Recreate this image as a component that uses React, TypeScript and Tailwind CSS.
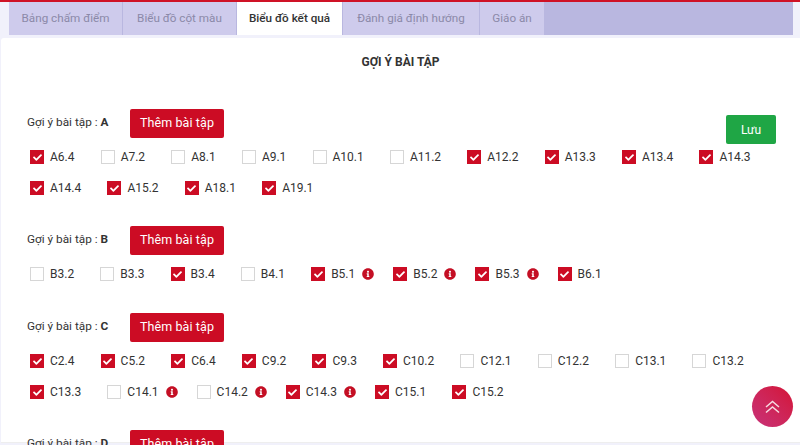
import React from "react";
import { FaInfoCircle, FaCheck } from "react-icons/fa";

type Item = { n: string; c?: boolean; i?: boolean };
const mk = (s: string): Item[] =>
  s.split(" ").map((t) => ({ n: t.replace(/[*!]/g, ""), c: t.includes("*"), i: t.includes("!") }));

const tabs = [
  { t: "Bảng chấm điểm", w: "w-[114px]" },
  { t: "Biểu đồ cột màu", w: "w-[114px]" },
  { t: "Biểu đồ kết quả", w: "w-[106px]", active: true },
  { t: "Đánh giá định hướng", w: "w-[137px]" },
  { t: "Giáo án", w: "w-[65px]" },
];

function Check({ item }: { item: Item }) {
  return (
    <label className="flex items-center h-[16px]">
      <span
        className={
          item.c
            ? "w-[14px] h-[14px] bg-[#cc0c24] flex items-center justify-center text-white"
            : "w-[14px] h-[14px] bg-white border-[1.5px] border-[#d6d6d6] flex items-center justify-center"
        }
      >
        {item.c && <FaCheck className="w-[9px] h-[9px]" />}
      </span>
      <span className="ml-[6px] text-[12px] leading-[16px] text-[#333]">{item.n}</span>
      {item.i && <FaInfoCircle className="ml-[7px] w-[12px] h-[12px] text-[#c40f24]" />}
    </label>
  );
}

function Row({ items, className = "" }: { items: Item[]; className?: string }) {
  return (
    <div className={"flex pl-[30px] h-[16px] " + className}>
      {items.map((it) => (
        <div key={it.n} className={it.i ? "mr-[19px]" : "mr-[26.15px]"}>
          <Check item={it} />
        </div>
      ))}
    </div>
  );
}

function Head({ letter }: { letter: string }) {
  return (
    <div className="flex items-center pl-[27px] h-[30px]">
      <span className="w-[103px] text-[11.8px] text-[#333]">
        Gợi ý bài tập : <b className="font-bold">{letter}</b>
      </span>
      <button className="w-[94px] h-[29px] rounded-[2px] bg-[#cc0c24] text-white text-[12.5px] tracking-[0.1px]">
        Thêm bài tập
      </button>
    </div>
  );
}

export default function App() {
  return (
    <div
      className="relative w-[800px] h-[445px] overflow-hidden bg-[#f1f1fb]"
      style={{ fontFamily: "Roboto, 'Noto Sans', sans-serif" }}
    >
      <div className="h-[2px] bg-[#cf1226]" />
      <div className="mx-[9px] w-[784px] h-[33px] bg-[#b9b7e0] flex">
        {tabs.map((t) => (
          <div
            key={t.t}
            className={
              t.w +
              " flex items-center justify-center text-[11.7px] border-r border-[#b9b7e0] " +
              (t.active
                ? "bg-white text-[#333] font-medium"
                : "bg-[#cecbec] text-[#8b89a8]")
            }
          >
            {t.t}
          </div>
        ))}
      </div>
      <div className="mt-[3px] ml-[1px] bg-white h-[405px] rounded-tl-[3px] border-b border-[#eeeeee]">
        <div className="pt-[15px] text-center text-[12px] font-bold text-[#333]">GỢI Ý BÀI TẬP</div>

        <div className="mt-[37px] flex justify-between -ml-[1px]">
          <Head letter="A" />
          <button className="mt-[7px] -mb-[7px] mr-[24px] w-[50px] h-[29px] rounded-[2px] bg-[#1fa645] text-white text-[12px]">
            Lưu
          </button>
        </div>
        <div className="-ml-[1px]">
          <Row
            className="mt-[11px]"
            items={mk("A6.4* A7.2 A8.1 A9.1 A10.1 A11.2 A12.2* A13.3* A13.4* A14.3*")}
          />
          <Row className="mt-[15px]" items={mk("A14.4* A15.2* A18.1* A19.1*")} />
          <div className="mt-[29px]">
            <Head letter="B" />
          </div>
          <Row
            className="mt-[11px]"
            items={mk("B3.2 B3.3 B3.4* B4.1 B5.1*! B5.2*! B5.3*! B6.1*")}
          />
          <div className="mt-[30px]">
            <Head letter="C" />
          </div>
          <Row
            className="mt-[11px]"
            items={mk("C2.4* C5.2* C6.4* C9.2* C9.3* C10.2* C12.1 C12.2 C13.1 C13.2")}
          />
          <Row
            className="mt-[15px]"
            items={mk("C13.3* C14.1! C14.2! C14.3*! C15.1* C15.2*")}
          />
          <div className="mt-[29px]">
            <Head letter="D" />
          </div>
        </div>
      </div>
      <div className="absolute left-[752px] top-[386px] w-[41px] h-[41px] rounded-full bg-gradient-to-tr from-[#c83078] to-[#d40f34] flex items-center justify-center text-[#f6dbe2]">
        <svg width="15" height="14" viewBox="0 0 15 14" fill="none" stroke="currentColor" strokeWidth="1.5">
          <path d="M1 7 L7.5 1.5 L14 7" />
          <path d="M1 12.5 L7.5 7 L14 12.5" />
        </svg>
      </div>
    </div>
  );
}
